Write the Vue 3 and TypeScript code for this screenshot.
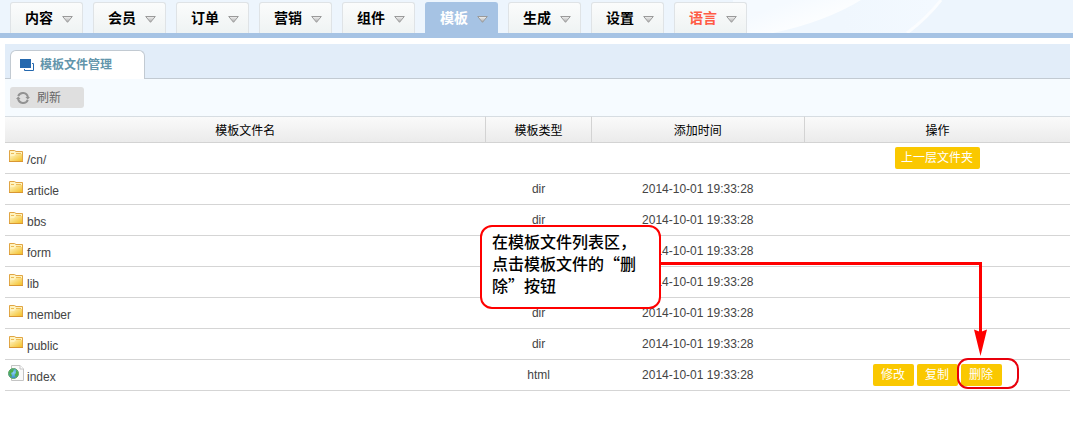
<script setup lang="ts">
interface MenuItem {
  label: string
  state?: 'active' | 'accent'
}

interface FileRow {
  name: string
  type: string
  time: string
  icon: 'folder' | 'page'
  actions: string[]
}

const menu: MenuItem[] = [
  { label: '内容' },
  { label: '会员' },
  { label: '订单' },
  { label: '营销' },
  { label: '组件' },
  { label: '模板', state: 'active' },
  { label: '生成' },
  { label: '设置' },
  { label: '语言', state: 'accent' },
]

const time = '2014-10-01 19:33:28'
const folder = (name: string): FileRow => ({ name, type: 'dir', time, icon: 'folder', actions: [] })

const rows: FileRow[] = [
  { name: '/cn/', type: '', time: '', icon: 'folder', actions: ['上一层文件夹'] },
  ...['article', 'bbs', 'form', 'lib', 'member', 'public'].map(folder),
  { name: 'index', type: 'html', time, icon: 'page', actions: ['修改', '复制', '删除'] },
]
</script>

<template>
  <div class="page">
    <svg width="0" height="0" class="defs" aria-hidden="true">
      <defs>
        <linearGradient id="arrow-fill" x1="0" y1="0" x2="0" y2="1">
          <stop offset="0" stop-color="#f4f4f4" />
          <stop offset="1" stop-color="#a8a8a8" />
        </linearGradient>
        <linearGradient id="folder-fill" x1="0" y1="0" x2="1" y2="1">
          <stop offset="0" stop-color="#fff6c8" />
          <stop offset="1" stop-color="#f3bf26" />
        </linearGradient>
        <linearGradient id="sheen-fill" gradientUnits="userSpaceOnUse" x1="60" y1="0" x2="78" y2="48">
          <stop offset="0" stop-color="#f5faff" />
          <stop offset="0.6" stop-color="#fdfeff" />
          <stop offset="0.8" stop-color="#f0f7fe" />
          <stop offset="1" stop-color="#f4f9fe" />
        </linearGradient>
        <linearGradient id="sheen-fade" gradientUnits="userSpaceOnUse" x1="110" y1="0" x2="200" y2="0">
          <stop offset="0" stop-color="#f0f7fe" />
          <stop offset="1" stop-color="#f3f9ff" />
        </linearGradient>
        <radialGradient id="globe-fill" cx="0.5" cy="0.4" r="0.6">
          <stop offset="0" stop-color="#8fd0f4" />
          <stop offset="1" stop-color="#2f86c4" />
        </radialGradient>
      </defs>
    </svg>

    <nav class="nav">
      <svg class="sheen" viewBox="0 0 340 33" preserveAspectRatio="none" aria-hidden="true">
        <path d="M0 33 V0 H209 Q194 20 174 33 Z" fill="url(#sheen-fade)" />
        <path d="M0 33 V0 H128 Q92 22 40 33 Z" fill="url(#sheen-fill)" />
        <path d="M174 33 Q194 18 208 0" fill="none" stroke="#fbfdff" stroke-width="3" />
      </svg>
      <a v-for="m in menu" :key="m.label" href="#" class="menu" :class="m.state">
        <span>{{ m.label }}</span>
        <svg width="11" height="7" viewBox="0 0 11 7" aria-hidden="true">
          <path d="M0.7 0.5 H10.3 L5.5 6.3 Z" fill="url(#arrow-fill)" stroke="#9a9a9a" />
        </svg>
      </a>
    </nav>

    <main class="panel">
      <div class="strip">
        <h1 class="tab">
          <svg width="15" height="13" viewBox="0 0 15 13" aria-hidden="true">
            <rect x="0.5" y="0.5" width="10" height="8" fill="#2468ae" stroke="#2468ae" />
            <path d="M12 4.5 H13.5 V11.5 H4.5 V10" fill="none" stroke="#2468ae" />
          </svg>
          <span>模板文件管理</span>
        </h1>
      </div>

      <div class="toolbar">
        <button type="button" class="refresh">
          <svg width="14" height="14" viewBox="0 0 14 14" aria-hidden="true">
            <path d="M2.2 5.2 A5.1 5.1 0 0 1 11.9 6.2 M11.8 8.8 A5.1 5.1 0 0 1 2.1 7.8" fill="none" stroke="#929292" stroke-width="2" />
            <path d="M9.4 6 H14 L11.8 8.6 Z M0 8 H4.6 L2.2 5.4 Z" fill="#929292" />
          </svg>
          <span>刷新</span>
        </button>
      </div>

      <table class="files">
        <colgroup>
          <col class="c-name" />
          <col class="c-type" />
          <col class="c-time" />
          <col />
        </colgroup>
        <thead>
          <tr>
            <th scope="col">模板文件名</th>
            <th scope="col">模板类型</th>
            <th scope="col">添加时间</th>
            <th scope="col">操作</th>
          </tr>
        </thead>
        <tbody>
          <tr v-for="r in rows" :key="r.name">
            <td>
              <a href="#" class="file">
                <svg v-if="r.icon === 'folder'" class="icon" width="16" height="16" viewBox="0 0 16 16" aria-hidden="true">
                  <path d="M1.5 13.5 V2.5 H6.5 L8 3.5 H14.5 V13.5 Z" fill="#fff3bf" stroke="#e0a544" />
                  <path d="M2 13 V8 H6 L8 6 H14 V13 Z" fill="url(#folder-fill)" />
                  <path d="M3 5.5 H6 M8 5.5 H13" stroke="#eebb55" />
                  <path d="M1 13.5 H15" stroke="#d99632" />
                </svg>
                <svg v-else class="icon" width="16" height="16" viewBox="0 0 16 16" aria-hidden="true">
                  <path d="M3.5 0.5 H12 L15.5 4 V15.5 H3.5 Z" fill="#fafafa" stroke="#c4c4c4" />
                  <path d="M12 0.5 V4 H15.5" fill="#fff" stroke="#c4c4c4" />
                  <circle cx="5.5" cy="8.5" r="5" fill="url(#globe-fill)" stroke="#5fa45f" />
                  <path d="M1 7 Q2 4 6 4 L5 7 L3 8 L4 11 L3 12 Q1 10 1 7 Z M8 5 L10 7 V10 L8 12 L6.5 10 L8 8 Z" fill="#4fae4a" />
                </svg>
                <span>{{ r.name }}</span>
              </a>
            </td>
            <td>{{ r.type }}</td>
            <td>{{ r.time }}</td>
            <td>
              <div v-if="r.actions.length" class="actions">
                <button v-for="a in r.actions" :key="a" type="button">{{ a }}</button>
              </div>
            </td>
          </tr>
        </tbody>
      </table>
    </main>

    <svg class="pointer" width="362" height="170" viewBox="0 0 362 170" aria-hidden="true">
      <path d="M2 39.5 H322.5 V110" fill="none" stroke="#f00" stroke-width="3" />
      <path d="M316 105.5 L322.5 108 L329 105.5 L322.5 132 Z" fill="#f00" />
      <rect x="300" y="135" width="60" height="29" rx="10" fill="none" stroke="#e8000c" stroke-width="2" />
    </svg>
    <p class="callout">在模板文件列表区，点击模板文件的“删除”按钮</p>
  </div>
</template>

<style>
body {
  margin: 0;
  background: #fff;
}
</style>

<style scoped>
.page {
  position: relative;
  font-family: "Liberation Sans", "Noto Sans CJK SC", sans-serif;
  font-size: 12px;
  color: #444;
}

.defs {
  position: absolute;
}

.nav {
  position: relative;
  display: flex;
  gap: 10px;
  padding: 2px 10px 0;
  background: #edf5fd;
  border-bottom: 5px solid #a6c3e4;
}

.sheen {
  position: absolute;
  top: 0;
  left: 733px;
  width: 340px;
  height: 100%;
}

.menu {
  position: relative;
  box-sizing: border-box;
  display: flex;
  align-items: center;
  justify-content: center;
  gap: 9px;
  width: 73px;
  height: 31px;
  padding-left: 5px;
  border: 1px solid #dfe3e6;
  border-bottom: 0;
  border-radius: 3px 3px 0 0;
  background: linear-gradient(#fbfcfc, #eff3f3);
  color: #000;
  font-size: 14px;
  font-weight: bold;
  line-height: 20px;
  text-decoration: none;
}

.menu span {
  padding-bottom: 1px;
}

.menu svg {
  margin-top: 3px;
}

.menu.active {
  background: #a6c3e4;
  border-color: #a6c3e4;
  color: #fff;
}

.menu.accent {
  color: #ff5b45;
}

.panel {
  margin: 6px 3px 0 5px;
}

.strip {
  display: flex;
  height: 34px;
  padding: 0 5px;
  align-items: flex-end;
  background: #e2edf9;
  border-bottom: 1px solid #c2cad2;
}

.tab {
  box-sizing: border-box;
  display: flex;
  align-items: center;
  gap: 5px;
  width: 135px;
  height: 29px;
  margin: 0 0 -1px;
  padding-left: 9px;
  border: 1px solid #c2cad2;
  border-bottom: 0;
  border-radius: 6px 6px 0 0;
  background: #fff;
  color: #6295ab;
  font-size: 12px;
  line-height: 18px;
}

.toolbar {
  height: 37px;
  box-sizing: border-box;
  padding: 8px 5px;
  background: #f6fbff;
}

.refresh {
  display: flex;
  align-items: center;
  gap: 7px;
  width: 74px;
  height: 21px;
  padding: 0 6px;
  border: 0;
  border-radius: 3px;
  background: #dfdfdf;
  color: #666;
  font: inherit;
  line-height: 18px;
}

.files {
  width: 100%;
  table-layout: fixed;
  border-collapse: separate;
  border-spacing: 0;
  text-align: center;
}

.c-name {
  width: 45.2%;
}

.c-type {
  width: 9.9%;
}

.c-time {
  width: 20%;
}

.files th {
  height: 25px;
  padding: 0;
  border-top: 1px solid #d7dde2;
  border-bottom: 1px solid #d3d3d3;
  border-right: 1px solid #d3d3d3;
  background: linear-gradient(#fafafa, #ebebeb);
  color: #000;
  font-weight: normal;
}

.files th:last-child {
  border-right: 0;
}

.files td {
  height: 30px;
  padding: 0 1px 0 0;
  border-bottom: 1px solid #d5d5d5;
  line-height: 18px;
}

.files td:last-child {
  padding: 0;
}

.file {
  display: flex;
  align-items: center;
  gap: 3px;
  padding-left: 3px;
  color: #444;
  text-decoration: none;
}

.icon {
  margin-bottom: 4px;
}

.file span {
  padding-top: 3px;
}

.actions {
  display: flex;
  justify-content: center;
  gap: 3px;
}

.actions button {
  height: 22px;
  padding: 0 7px 0 6px;
  min-width: 41px;
  border: 0;
  border-radius: 2px;
  background: #fac800;
  color: #fff;
  font: inherit;
  line-height: 20px;
}

.callout {
  position: absolute;
  box-sizing: border-box;
  left: 480px;
  top: 225px;
  width: 181px;
  min-height: 84px;
  margin: 0;
  padding: 3px 10px;
  border: 2px solid #f00;
  border-radius: 12px;
  background: #fff;
  color: #000;
  font-family: "Noto Sans CJK SC", sans-serif;
  font-size: 16px;
  font-weight: 500;
  line-height: 22px;
}

.pointer {
  position: absolute;
  left: 658px;
  top: 224px;
}
</style>
